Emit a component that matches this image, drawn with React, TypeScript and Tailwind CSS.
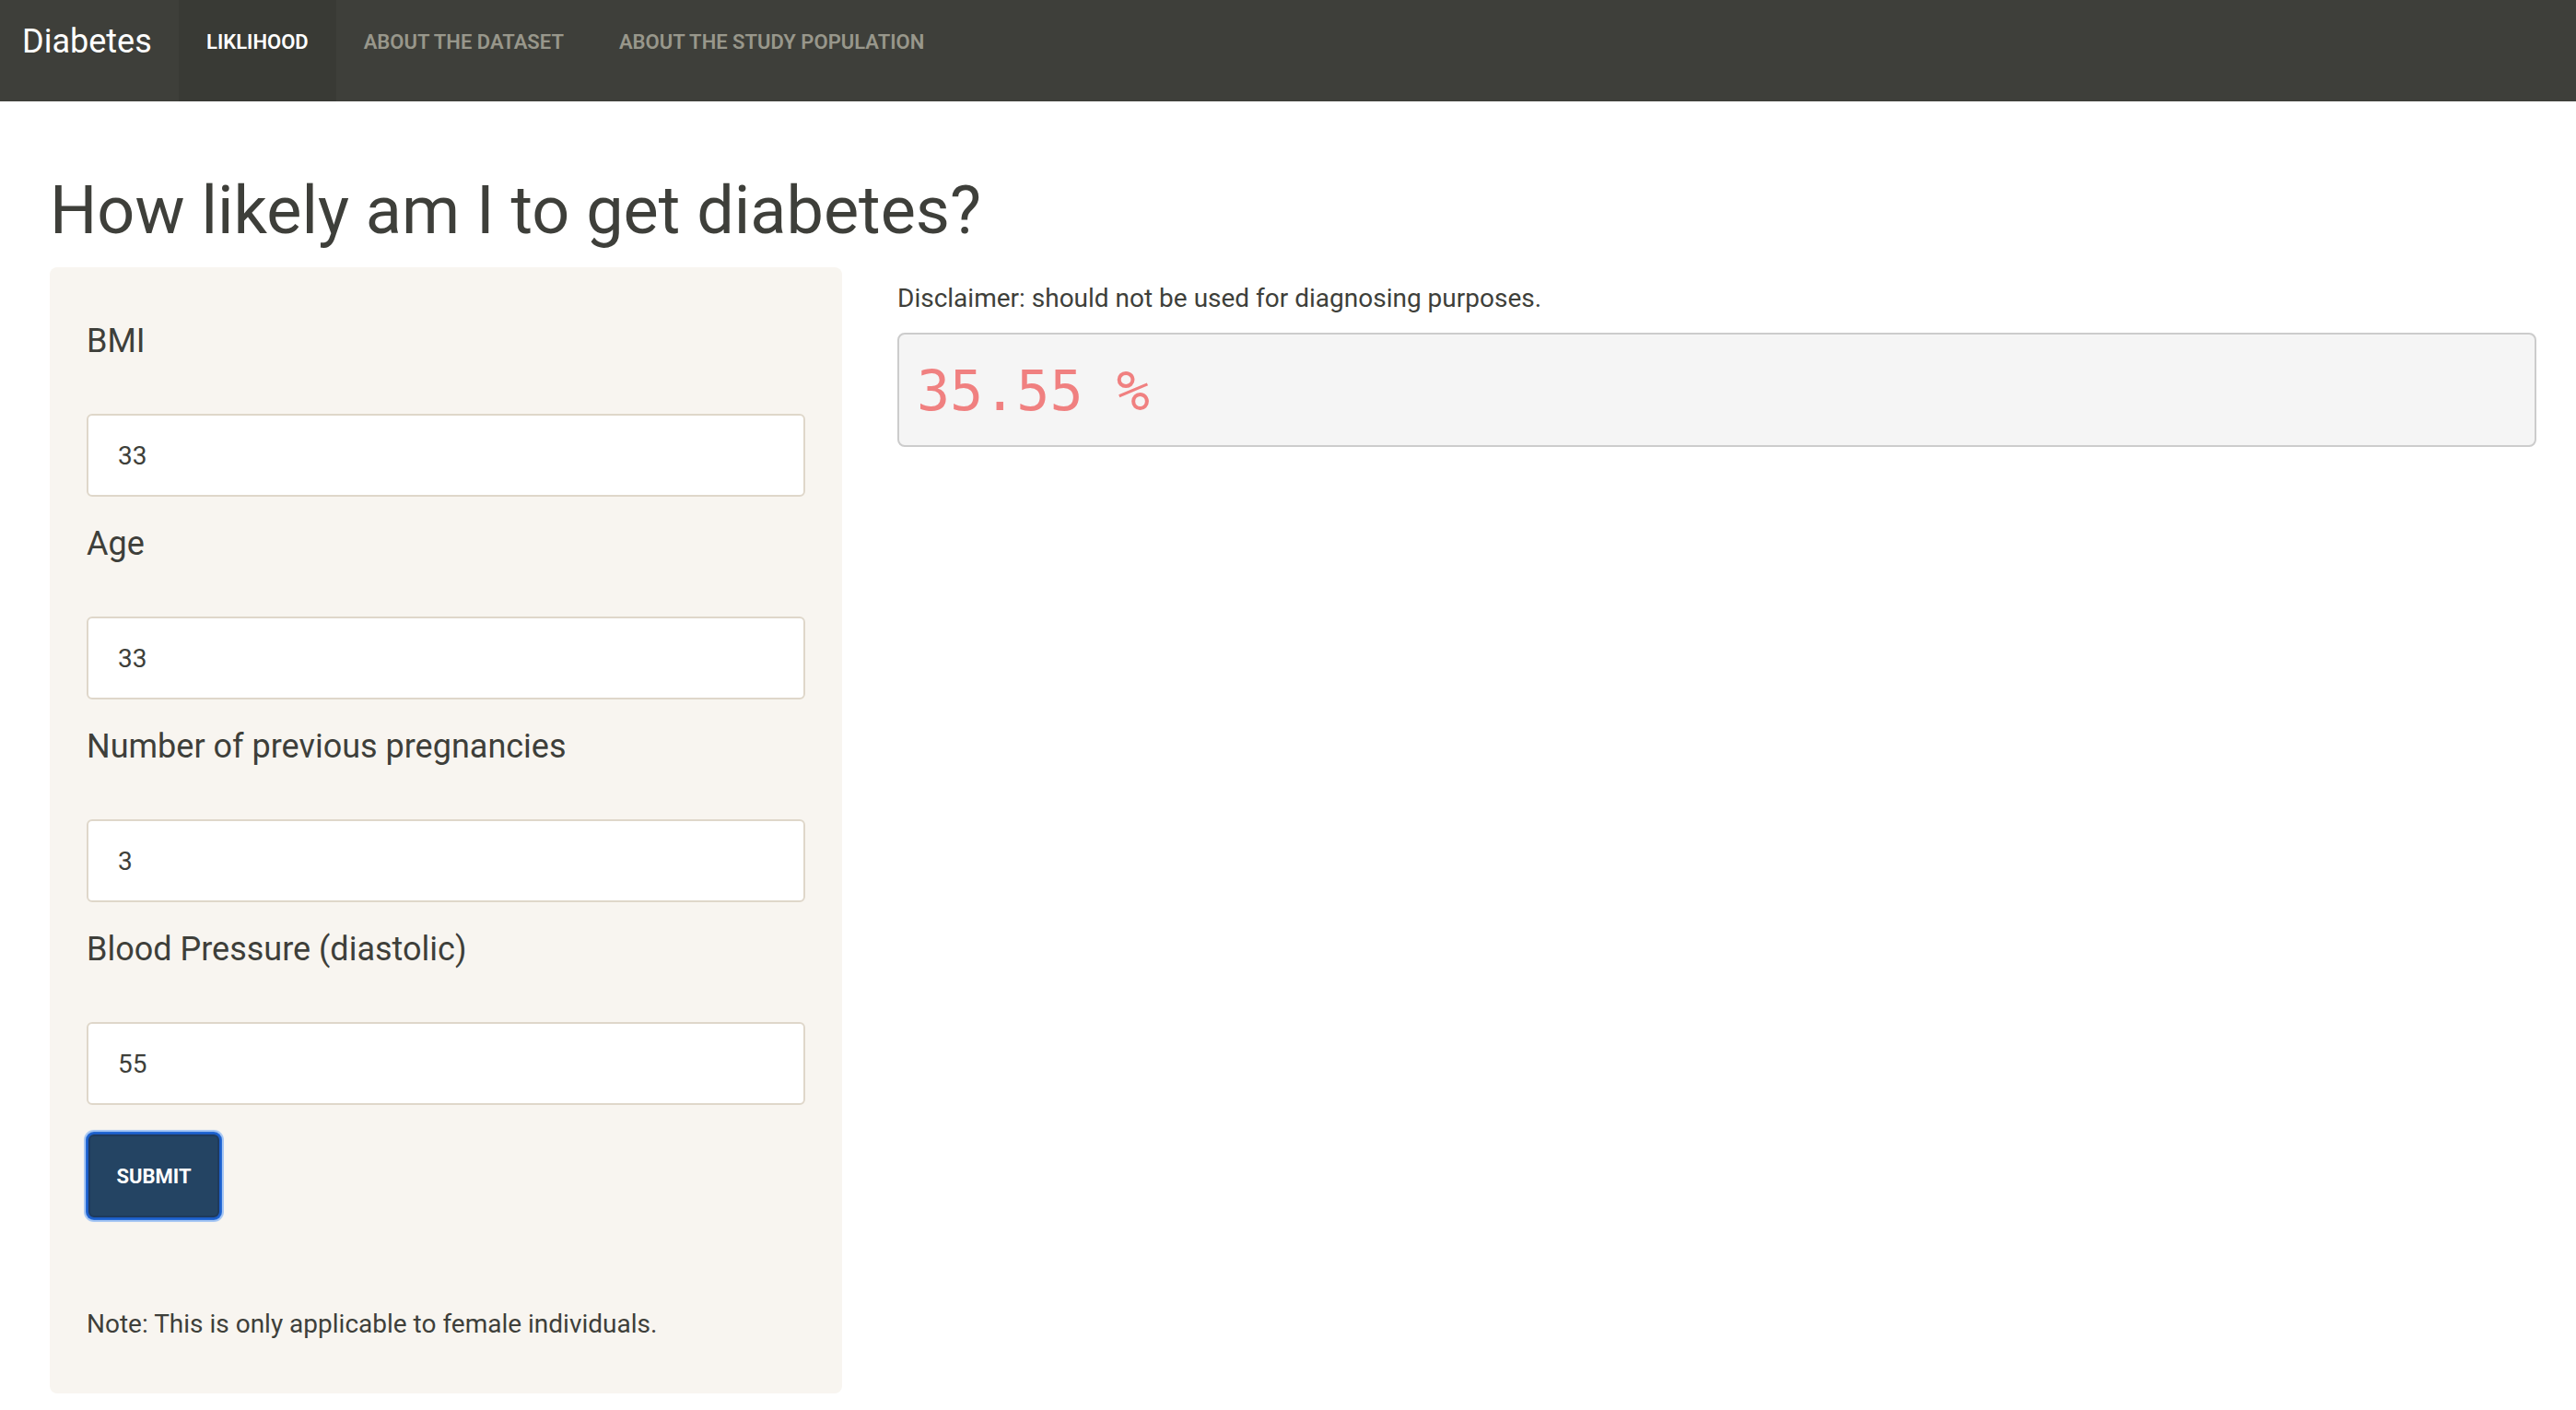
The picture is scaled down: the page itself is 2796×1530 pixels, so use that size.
const links = [
  { label: "Liklihood", active: true },
  { label: "About the dataset", active: false },
  { label: "About the study population", active: false },
];

const fields = [
  { label: "BMI", value: "33" },
  { label: "Age", value: "33" },
  { label: "Number of previous pregnancies", value: "3" },
  { label: "Blood Pressure (diastolic)", value: "55" },
];

export default function App() {
  return (
    <div className="bg-white text-[#3e3f3a] font-['Roboto',sans-serif]">
      <nav className="flex h-[110px] bg-[#3e3f3a]">
        <a className="w-[194px] pl-[24px] pt-[25px] text-[36px] leading-[40px] text-white">Diabetes</a>
        <ul className="flex">
          {links.map((l) => (
            <li
              key={l.label}
              className={
                l.active
                  ? "px-[30px] pt-[31px] bg-[#393a35] text-white text-[22px] leading-[30px] font-semibold uppercase"
                  : "px-[30px] pt-[31px] text-[#98978b] text-[22px] leading-[30px] font-semibold uppercase"
              }
            >
              {l.label}
            </li>
          ))}
        </ul>
      </nav>

      <main className="pl-[54px] pr-[43px]">
        <h1 className="mt-[79px] text-[72px] leading-[80px] font-normal">How likely am I to get diabetes?</h1>

        <div className="mt-[21px] flex items-start gap-[60px]">
          {/* sidebar well */}
          <form className="w-[860px] rounded-[8px] bg-[#f8f5f0] px-[40px] pt-[55px] pb-[55px]">
            <div className="flex flex-col gap-[26px]">
              {fields.map((f) => (
                <div key={f.label}>
                  <label className="block mb-[54px] text-[36px] leading-[50px]">{f.label}</label>
                  <input
                    readOnly
                    value={f.value}
                    className="block w-full h-[90px] rounded-[6px] border-2 border-[#dfd7ca] bg-white px-[32px] text-[28px] text-[#3e3f3a] outline-none"
                  />
                </div>
              ))}
            </div>
            <button
              type="button"
              className="mt-[30px] w-[146px] h-[94px] rounded-[8px] border-2 border-[#1d5fc9] bg-[#244463] text-white text-[22px] font-bold uppercase shadow-[inset_0_0_0_2px_#1e3a5c,0_0_0_1px_#2b6fd8,0_0_0_3px_#a9c8f3]"
            >
              Submit
            </button>
            <p className="mt-[94px] text-[28px] leading-[40px]">Note: This is only applicable to female individuals.</p>
          </form>

          {/* main panel */}
          <div className="flex-1 pt-[14px]">
            <p className="text-[28px] leading-[40px]">Disclaimer: should not be used for diagnosing purposes.</p>
            <pre className="mt-[17px] h-[124px] rounded-[8px] border-2 border-[#cccccc] bg-[#f5f5f5] pl-[19px] pt-[25px] text-[60px] leading-[72px] text-[#f08080] font-['DejaVu_Sans_Mono',monospace]">
              35.55 %
            </pre>
          </div>
        </div>
      </main>
    </div>
  );
}
